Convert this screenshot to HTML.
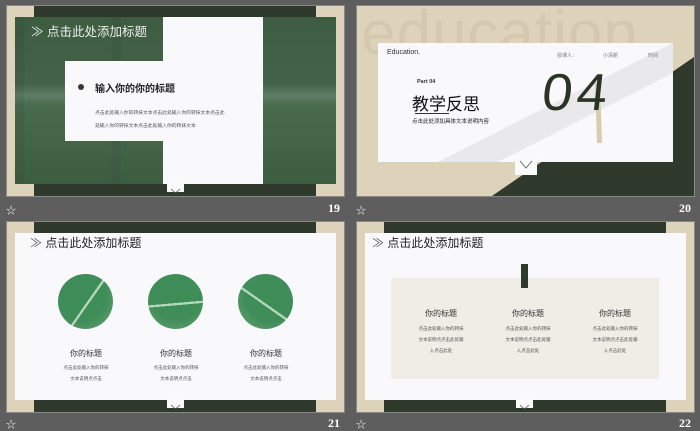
<!DOCTYPE html>
<html><head><meta charset="utf-8"><style>
*{margin:0;padding:0;box-sizing:border-box}
body{width:700px;height:429px;background:#5e5e5e;position:relative;overflow:hidden;font-family:"Liberation Sans","Noto Sans CJK SC",sans-serif}
.a{position:absolute}
.slide{position:absolute;width:337px;height:190px;background:#ddd3bb;overflow:hidden;outline:1px solid #888}
.bar{position:absolute;left:27px;width:282px;height:12px;background:#2f3a2c}
.chev{position:absolute;background:#fafafa}
.num{position:absolute;color:#fff;font-family:"Liberation Serif",serif;font-weight:bold;font-size:12px}
.star{position:absolute;color:#eee;font-size:10px}
.green{background:
 linear-gradient(90deg,rgba(0,0,0,.06) 0 3%,transparent 3% 30%,rgba(0,0,0,.05) 30% 33%,transparent 33% 60%,rgba(0,0,0,.06) 60% 62%,transparent 62%),
 linear-gradient(180deg,#3d5c40 0,#44634a 40%,#5f7c64 47%,#4a6a4e 53%,#3d5d41 100%)}
.circ{position:absolute;width:55px;height:55px;border-radius:50%;background:
 linear-gradient(125deg,transparent 0 52%,rgba(220,240,220,.75) 52% 55%,transparent 55%),
 radial-gradient(circle at 40% 40%,#3e8c56,#3f8d58 55%,#6aa67a)}
.t{position:absolute;text-align:center;color:#333}
.small{font-size:4.5px;color:#555;line-height:11px}
</style></head><body>

<!-- slide 19 -->
<div class="slide" style="left:7px;top:6px">
 <div class="bar" style="top:0"></div><div class="bar" style="top:178px"></div>
 <div class="a green" style="left:8px;top:11px;width:321px;height:167px"></div>
 <div class="a" style="left:156px;top:11px;width:100px;height:167px;background:#f9f8fa"></div>
 <div class="a" style="left:58px;top:55px;width:100px;height:80px;background:#f9f8fa"></div>
 <div class="a" style="left:24px;top:15px;color:#eee;font-size:12.5px;white-space:nowrap">≫ 点击此处添加标题</div>
 <div class="a" style="left:71px;top:78px;width:6px;height:6px;border-radius:50%;background:#333a30"></div>
 <div class="a" style="left:88px;top:74px;font-size:10px;font-weight:bold;color:#222;white-space:nowrap">输入你的你的标题</div>
 <div class="a" style="left:88px;top:101px;font-size:4.8px;color:#555;line-height:13px;white-space:nowrap">点击此处输入你的转抹文本点击此处输入你的转抹文本点击此<br>处输入你的转抹文本点击此处输入你的转抹文本</div>
 <div class="chev" style="left:160px;top:177px;width:17px;height:9px"><svg width="17" height="9"><path d="M4 2 L8.5 6 L13 2" stroke="#555" fill="none" stroke-width=".8"/></svg></div>
</div>
<div class="star" style="left:6px;top:202px">☆</div><div class="num" style="left:328px;top:201px">19</div>

<!-- slide 20 -->
<div class="slide" style="left:357px;top:6px">
 <div class="a" style="left:4px;top:-8px;font-size:62px;color:#d4c9ae;letter-spacing:1px">education</div>
 <svg class="a" style="left:0;top:0" width="337" height="190"><polygon points="135,190 337,51 337,190" fill="#2f3a2c"/></svg>
 <div class="a" style="left:21px;top:37px;width:295px;height:119px;background:#f9f8fa;overflow:hidden">
  <svg class="a" width="295" height="119"><polygon points="60,119 295,0 295,30 120,119" fill="#e9e8ea"/></svg>
  <div class="a" style="left:9px;top:6px;font-size:7px;color:#333">Education.</div>
  <div class="a" style="left:179px;top:9px;font-size:5px;color:#777">授课人：</div>
  <div class="a" style="left:225px;top:9px;font-size:5px;color:#777">小清新</div>
  <div class="a" style="left:270px;top:9px;font-size:5px;color:#777">时间</div>
  <div class="a" style="left:39px;top:36px;font-size:5.5px;font-weight:bold;color:#333">Part 04</div>
  <div class="a" style="left:34px;top:47px;font-size:17px;color:#111">教学反思</div>
  <div class="a" style="left:37px;top:70px;width:34px;height:1px;background:#333"></div>
  <div class="a" style="left:34px;top:74px;font-size:5.5px;color:#222">点击此处添加具体文本说明内容</div>
  <div class="a" style="left:218px;top:40px;width:5px;height:60px;background:#d9cdb0;transform:rotate(-2deg)"></div>
  <div class="a" style="left:166px;top:20px;font-size:52px;color:#2a3326;font-family:'Liberation Sans',sans-serif;transform:scaleX(1.05) skewX(-6deg);letter-spacing:4px">04</div>
 </div>
 <div class="chev" style="left:158px;top:149px;width:22px;height:20px"><svg width="22" height="20"><path d="M5 6 L11 13 L17 6" stroke="#555" fill="none" stroke-width=".8"/></svg></div>
</div>
<div class="star" style="left:6px;top:416px">☆</div><div class="num" style="left:679px;top:201px">20</div>

<!-- slide 21 -->
<div class="slide" style="left:7px;top:222px">
 <div class="bar" style="top:0"></div><div class="bar" style="top:178px"></div>
 <div class="a" style="left:8px;top:11px;width:321px;height:167px;background:#f9f8fa"></div>
 <div class="a" style="left:23px;top:12px;color:#222;font-size:12px;white-space:nowrap"><span style="color:#555">≫</span> 点击此处添加标题</div>
 <div class="circ" style="left:51px;top:52px"></div>
 <div class="circ" style="left:141px;top:52px;transform:rotate(50deg)"></div>
 <div class="circ" style="left:231px;top:52px;transform:rotate(90deg)"></div>
 <div class="t" style="left:39px;top:126px;width:80px;font-size:8px">你的标题</div>
 <div class="t small" style="left:39px;top:140px;width:80px">点击此处输入你的转抹<br>文本说明点点击</div>
 <div class="t" style="left:129px;top:126px;width:80px;font-size:8px">你的标题</div>
 <div class="t small" style="left:129px;top:140px;width:80px">点击此处输入你的转抹<br>文本说明点点击</div>
 <div class="t" style="left:219px;top:126px;width:80px;font-size:8px">你的标题</div>
 <div class="t small" style="left:219px;top:140px;width:80px">点击此处输入你的转抹<br>文本说明点点击</div>
 <div class="chev" style="left:160px;top:177px;width:17px;height:9px"><svg width="17" height="9"><path d="M4 2 L8.5 6 L13 2" stroke="#555" fill="none" stroke-width=".8"/></svg></div>
</div>
<div class="num" style="left:328px;top:416px">21</div>

<!-- slide 22 -->
<div class="slide" style="left:357px;top:222px">
 <div class="bar" style="top:0"></div><div class="bar" style="top:178px"></div>
 <div class="a" style="left:8px;top:11px;width:321px;height:167px;background:#f9f8fa"></div>
 <div class="a" style="left:15px;top:12px;color:#222;font-size:12px;white-space:nowrap"><span style="color:#555">≫</span> 点击此处添加标题</div>
 <div class="a" style="left:34px;top:56px;width:268px;height:101px;background:#f0ede6"></div>
 <div class="a" style="left:164px;top:42px;width:7px;height:24px;background:#2f3a2c"></div>
 <div class="t" style="left:44px;top:86px;width:80px;font-size:8px">你的标题</div>
 <div class="t small" style="left:44px;top:101px;width:80px">点击此处输入你的转抹<br>文本说明点点击此处输<br>入点击此处</div>
 <div class="t" style="left:131px;top:86px;width:80px;font-size:8px">你的标题</div>
 <div class="t small" style="left:131px;top:101px;width:80px">点击此处输入你的转抹<br>文本说明点点击此处输<br>入点击此处</div>
 <div class="t" style="left:218px;top:86px;width:80px;font-size:8px">你的标题</div>
 <div class="t small" style="left:218px;top:101px;width:80px">点击此处输入你的转抹<br>文本说明点点击此处输<br>入点击此处</div>
 <div class="chev" style="left:159px;top:177px;width:17px;height:9px"><svg width="17" height="9"><path d="M4 2 L8.5 6 L13 2" stroke="#555" fill="none" stroke-width=".8"/></svg></div>
</div>
<div class="star" style="left:356px;top:416px">☆</div><div class="star" style="left:356px;top:202px">☆</div><div class="num" style="left:679px;top:416px">22</div>

</body></html>
